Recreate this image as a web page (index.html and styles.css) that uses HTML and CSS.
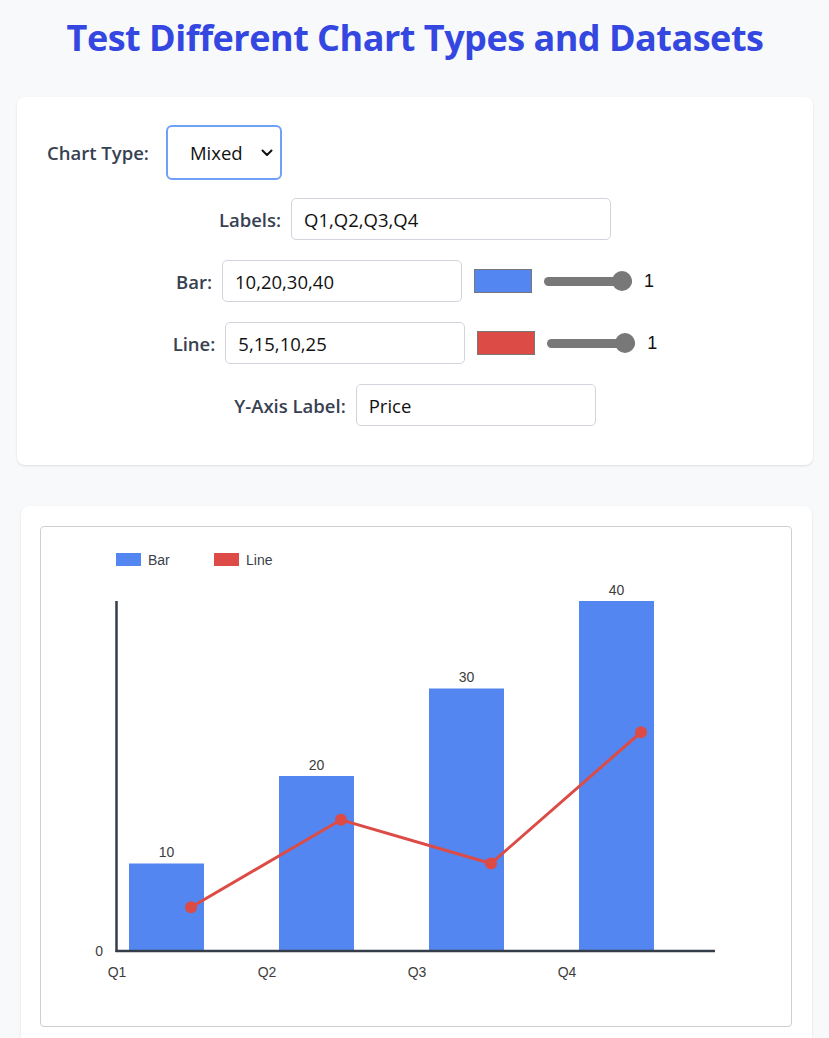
FILE: index.html
```html
<!DOCTYPE html>
<html lang="en">
<head>
<meta charset="utf-8">
<title>Test Different Chart Types and Datasets</title>
<link rel="stylesheet" href="styles.css">
</head>
<body>
<main class="page">
  <h1 class="title">Test Different Chart Types and Datasets</h1>

  <section class="card form-card">
    <div class="type-row">
      <label class="lbl" for="ctype">Chart Type:</label>
      <div class="select-wrap">
        <select id="ctype" class="select">
          <option>Mixed</option>
          <option>Bar</option>
          <option>Line</option>
        </select>
        <svg class="chev" width="12" height="8" viewBox="0 0 12 8"><path d="M1.5 1.5 L6 6 L10.5 1.5" fill="none" stroke="#111" stroke-width="2" stroke-linecap="round" stroke-linejoin="round"/></svg>
      </div>
    </div>

    <div class="row">
      <label class="lbl">Labels:</label>
      <input class="txt wide" type="text" value="Q1,Q2,Q3,Q4">
    </div>

    <div class="row">
      <label class="lbl">Bar:</label>
      <input class="txt" type="text" value="10,20,30,40">
      <span class="swatch blue"></span>
      <input class="range" type="range" min="0" max="1" step="0.1" value="1">
      <span class="val">1</span>
    </div>

    <div class="row">
      <label class="lbl">Line:</label>
      <input class="txt" type="text" value="5,15,10,25">
      <span class="swatch red"></span>
      <input class="range" type="range" min="0" max="1" step="0.1" value="1">
      <span class="val">1</span>
    </div>

    <div class="row">
      <label class="lbl">Y-Axis Label:</label>
      <input class="txt" type="text" value="Price">
    </div>
  </section>

  <section class="card chart-card">
    <div class="chart-box">
      <svg class="chart" width="749" height="499" viewBox="0 0 749 499">
        <!-- legend -->
        <rect x="75" y="26" width="25" height="13" fill="#5386f0"/>
        <text class="legend" x="107" y="38">Bar</text>
        <rect x="173" y="26" width="25" height="13" fill="#dd4b47"/>
        <text class="legend" x="205" y="38">Line</text>

        <!-- bars -->
        <rect x="88" y="336.5" width="75" height="87.5" fill="#5386f0"/>
        <rect x="238" y="249" width="75" height="175" fill="#5386f0"/>
        <rect x="388" y="161.5" width="75" height="262.5" fill="#5386f0"/>
        <rect x="538" y="74" width="75" height="350" fill="#5386f0"/>

        <!-- value labels -->
        <text class="vlab" x="125.5" y="330">10</text>
        <text class="vlab" x="275.5" y="242.5">20</text>
        <text class="vlab" x="425.5" y="155">30</text>
        <text class="vlab" x="575.5" y="67.5">40</text>

        <!-- axes -->
        <line x1="75.5" y1="74" x2="75.5" y2="425" stroke="#363d4a" stroke-width="2.5"/>
        <line x1="74.5" y1="424" x2="674" y2="424" stroke="#363d4a" stroke-width="2.5"/>

        <!-- line series -->
        <polyline points="150,380.25 300,292.75 450,336.5 600,205.25" fill="none" stroke="#dd4b47" stroke-width="3"/>
        <circle cx="150" cy="380.25" r="6" fill="#dd4b47"/>
        <circle cx="300" cy="292.75" r="6" fill="#dd4b47"/>
        <circle cx="450" cy="336.5" r="6" fill="#dd4b47"/>
        <circle cx="600" cy="205.25" r="6" fill="#dd4b47"/>

        <!-- axis labels -->
        <text class="tick end" x="62" y="429">0</text>
        <text class="tick" x="76" y="450">Q1</text>
        <text class="tick" x="226" y="450">Q2</text>
        <text class="tick" x="376" y="450">Q3</text>
        <text class="tick" x="526" y="450">Q4</text>
      </svg>
    </div>
  </section>
</main>
</body>
</html>
```

FILE: styles.css
```css
* { box-sizing: border-box; }

html, body {
  margin: 0;
  padding: 0;
  background: #f7f9fb;
}

body {
  font-family: "Open Sans", "Noto Sans", sans-serif;
  color: #374151;
}

.page {
  padding: 0 16px 0 17px;
}

.title {
  margin: 0;
  padding: 13px 0 0;
  height: 97px;
  text-align: center;
  font-size: 36px;
  font-weight: 700;
  color: #3447e0;
  letter-spacing: -0.5px;
}

.card {
  background: #ffffff;
  border-radius: 8px;
  box-shadow: 0 1px 3px rgba(0, 0, 0, 0.08), 0 1px 2px rgba(0, 0, 0, 0.04);
}

.form-card {
  padding: 28px 30px 39px;
  display: flex;
  flex-direction: column;
  gap: 20px;
}

.type-row {
  display: flex;
  align-items: center;
  gap: 17px;
  margin-bottom: -2px;
}

.lbl {
  font-size: 18.5px;
  font-weight: 600;
  color: #374151;
  white-space: nowrap;
}

.select-wrap {
  position: relative;
  width: 116px;
  height: 55px;
}

.select {
  -webkit-appearance: none;
  appearance: none;
  width: 100%;
  height: 100%;
  border: 2px solid #6fa1f6;
  border-radius: 6px;
  background: #fff;
  font-family: inherit;
  font-size: 18.5px;
  color: #111;
  padding: 0 0 0 22px;
  outline: none;
}

.chev {
  position: absolute;
  right: 9px;
  top: 24px;
  pointer-events: none;
}

.row {
  display: flex;
  align-items: center;
  justify-content: center;
  gap: 10px;
}

.txt {
  width: 240px;
  height: 42px;
  border: 1px solid #d1d5db;
  border-radius: 5px;
  padding: 0 12px;
  font-family: inherit;
  font-size: 18.5px;
  color: #111;
  background: #fff;
  outline: none;
}

.txt.wide {
  width: 320px;
}

.swatch {
  display: block;
  width: 58px;
  height: 24px;
  border: 1px solid #777;
  margin-left: 2px;
}

.swatch.blue { background: #5386f0; }
.swatch.red { background: #dd4b47; }

.range {
  -webkit-appearance: none;
  appearance: none;
  width: 88px;
  height: 9px;
  margin: 0 0 0 2px;
  border-radius: 5px;
  background: #787878;
  outline: none;
}

.range::-webkit-slider-thumb {
  -webkit-appearance: none;
  appearance: none;
  width: 20px;
  height: 20px;
  border-radius: 50%;
  background: #787878;
  border: none;
}

.val {
  font-family: "Liberation Sans", Arial, sans-serif;
  font-size: 18px;
  color: #111;
  margin-left: 2px;
}

.chart-card {
  margin: 41px 1px 0 4px;
  padding: 20px 20px 40px 19px;
}

.chart-box {
  border: 1px solid #cfcfcf;
  border-radius: 4px;
  background: #fff;
  height: 501px;
}

.chart {
  display: block;
}

.chart text {
  font-family: "Liberation Sans", Arial, sans-serif;
  font-size: 14px;
}

.chart .legend {
  fill: #3a3f4a;
}

.chart .vlab {
  fill: #3d3d3d;
  text-anchor: middle;
}

.chart .tick {
  fill: #3d3d3d;
  text-anchor: middle;
}

.chart .tick.end {
  text-anchor: end;
}
```
